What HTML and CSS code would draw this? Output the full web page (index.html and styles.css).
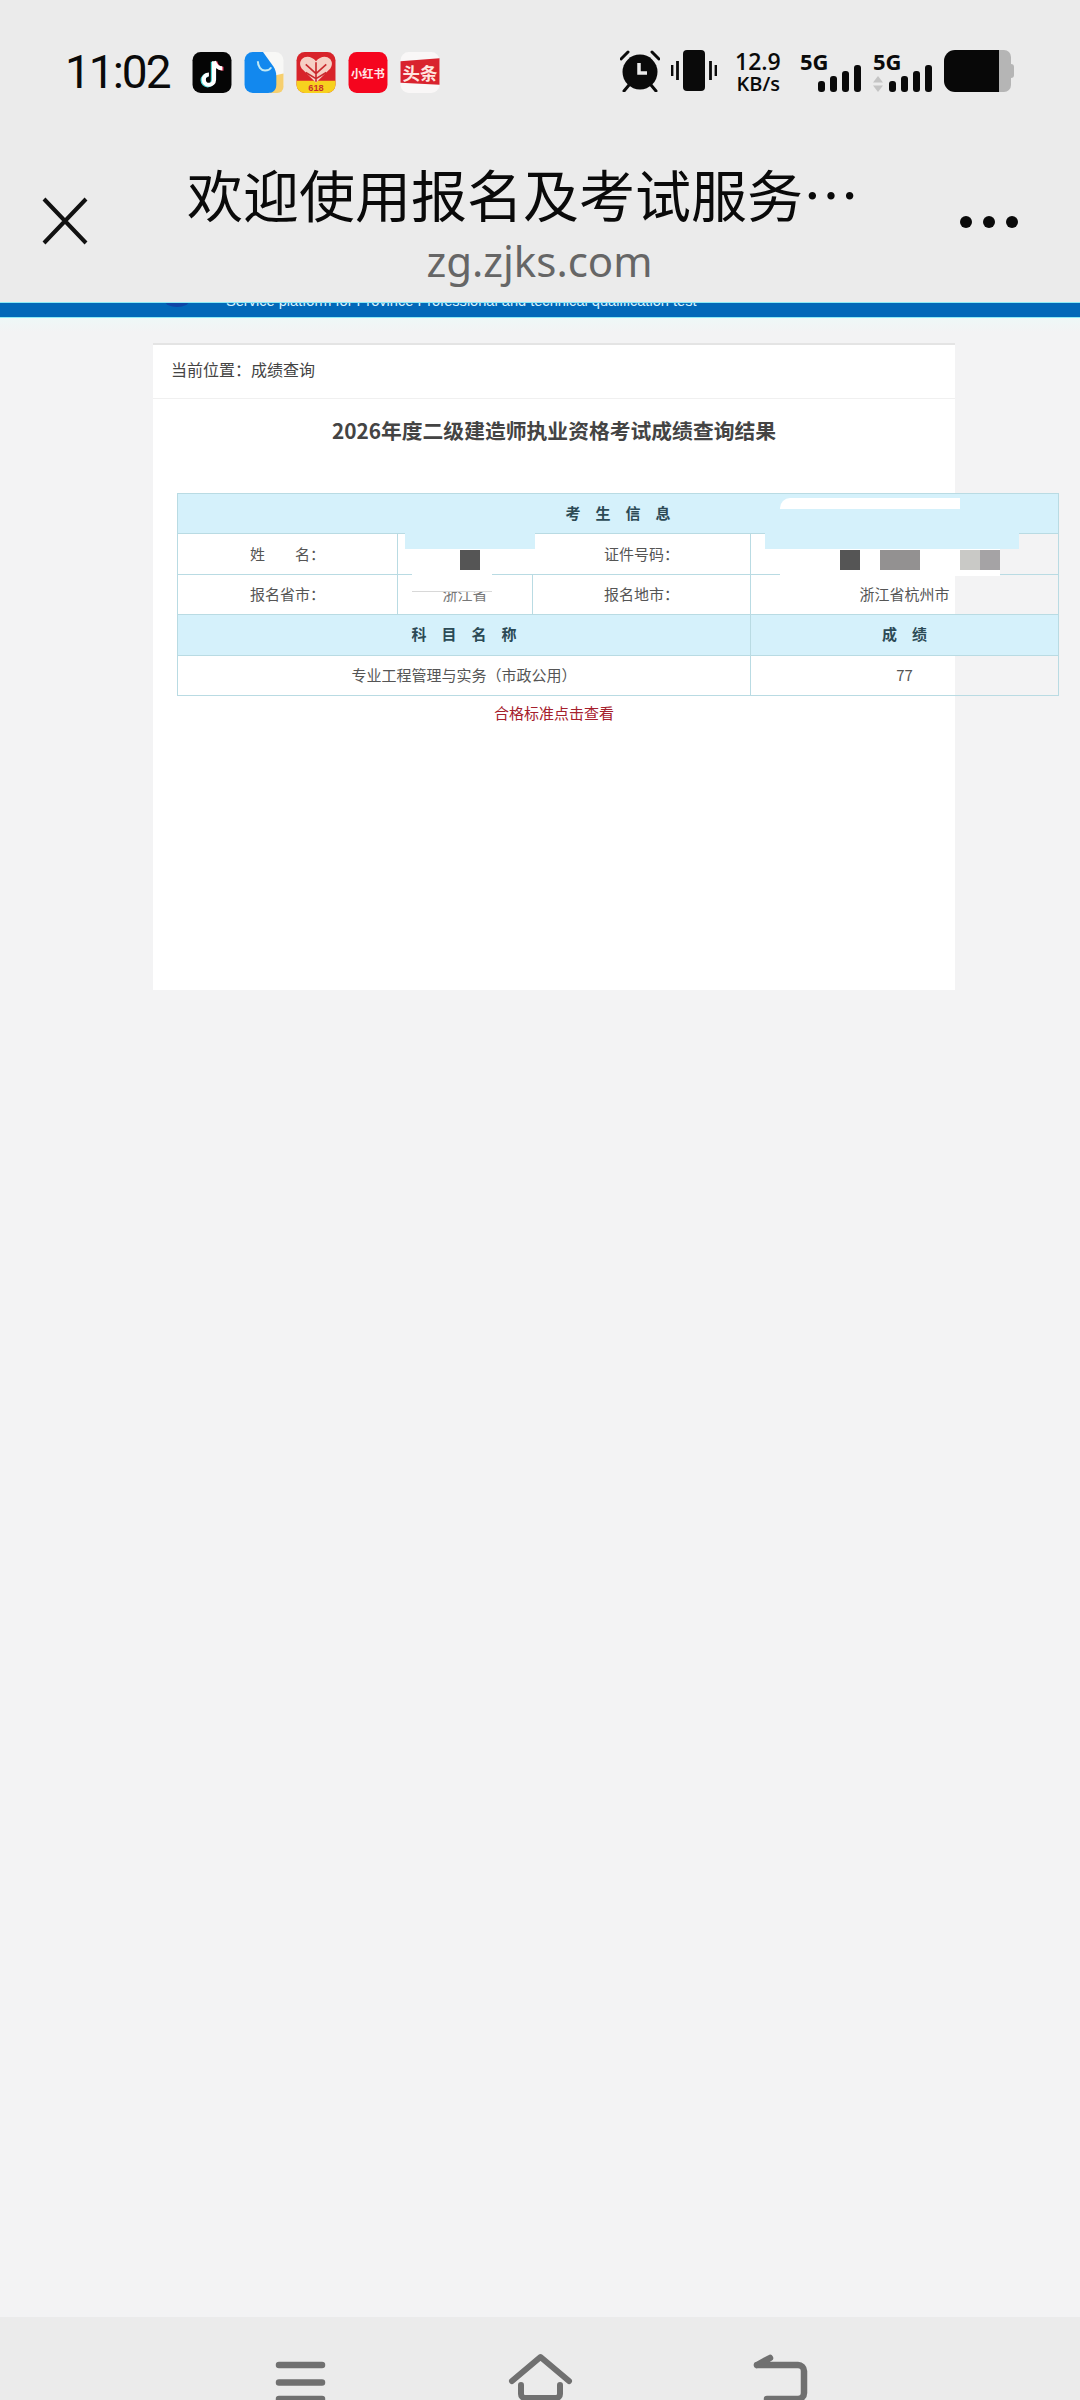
FILE: index.html
```html
<!DOCTYPE html>
<html lang="zh-CN">
<head>
    <meta charset="UTF-8">
    <meta name="viewport" content="width=device-width, initial-scale=1.0">
    <title>成绩查询</title>
    <link rel="stylesheet" href="styles.css">
</head>
<body>
    <!-- 顶部 -->
    <header class="top">
        <div class="status">
            <span class="time">11:02</span>
            <div class="apps">
                <svg class="app" viewBox="0 0 38 40"><rect width="38" height="40" rx="8" fill="#050505"/><path d="M21 9v18a5 5 0 1 1-5-5" fill="none" stroke="#4fd8d8" stroke-width="4" transform="translate(-1.2 .6)"/><path d="M21 9c1 4 4 7 8 7" fill="none" stroke="#ef3f63" stroke-width="4" transform="translate(1.2 .4)"/><path d="M21 9v18a5 5 0 1 1-5-5M21 9c1 4 4 7 8 7" fill="none" stroke="#fff" stroke-width="4"/></svg>
                <svg class="app" viewBox="0 0 38 40"><rect width="38" height="40" rx="8" fill="#f8f8f6"/><path d="M25 40V24l13-3v13a6 6 0 0 1-6 6z" fill="#f6cf6e"/><path d="M8 0h10l10 14c2 3 3 6 3 10v8c0 5-3 8-8 8H8a8 8 0 0 1-8-8V8a8 8 0 0 1 8-8z" fill="#1288ee"/><path d="M13 9c0 5 3 9 7 9 3 0 5-1 6-3" fill="none" stroke="#bfe8f5" stroke-width="2"/></svg>
                <svg class="app" viewBox="0 0 38 40"><rect width="38" height="40" rx="8" fill="#d8232a"/><path d="M0 28h38v4a8 8 0 0 1-8 8H8a8 8 0 0 1-8-8z" fill="#f7d11e"/><path d="M19 30 5 16a8 8 0 0 1 0-9c4-4 10-3 14 2 4-5 10-6 14-2a8 8 0 0 1 0 9z" fill="#f6cfc4"/><path d="M19 29V10M9 12l10 9 10-9M9 20l10 6 10-6" fill="none" stroke="#c92a2e" stroke-width="1.6"/><text class="app-618" x="19" y="38.500">618</text></svg>
                <svg class="app" viewBox="0 0 38 40"><rect width="38" height="40" rx="8" fill="#f5051e"/><text class="app-xhs" x="19" y="25">小红书</text></svg>
                <svg class="app" viewBox="0 0 38 40"><rect width="38" height="40" rx="8" fill="#f9f7f7"/><path d="M0 9l38-3v26l-38-2z" fill="#d9232e"/><text class="app-tt" x="19" y="27">头条</text></svg>
            </div>
            <div class="sys">
                <svg class="alarm" viewBox="0 0 40 42"><circle cx="20" cy="22" r="17.500" fill="#0a0a0a"/><path d="M19 13v10h8" fill="none" stroke="#ebebeb" stroke-width="3.500"/><path d="M1 9l7-7M39 9l-7-7M4 41l5-6M36 41l-5-6" stroke="#0a0a0a" stroke-width="3" stroke-linecap="round"/></svg>
                <svg class="vibrate" viewBox="0 0 46 42"><rect x="12" y="0" width="22" height="41" rx="4" fill="#0a0a0a"/><path d="M1 15v11M6.500 11v19M39.500 11v19M45 15v11" stroke="#0a0a0a" stroke-width="2.800"/></svg>
                <div class="speed"><b>12.9</b><span>KB/s</span></div>
                <div class="sim">
                    <b>5G</b>
                    <div class="bars"><i class="b1"></i><i class="b2"></i><i class="b3"></i><i class="b4"></i></div>
                </div>
                <div class="sim sim2">
                    <b>5G</b>
                    <svg class="arrows" viewBox="0 0 10 16"><path d="M5 0l5 6.500H0zM5 16l5-6.500H0z" fill="#c4c4c4"/></svg>
                    <div class="bars"><i class="b1"></i><i class="b2"></i><i class="b3"></i><i class="b4"></i></div>
                </div>
                <div class="battery"><div class="battery-fill"></div><div class="battery-rest"></div><div class="battery-tip"></div></div>
            </div>
        </div>
        <div class="titlebar">
            <svg class="close" viewBox="0 0 46 48"><path d="M2 2l42 44M44 2 2 46" stroke="#111" stroke-width="4"/></svg>
            <div class="titles">
                <div class="page-title">欢迎使用报名及考试服务…</div>
                <div class="url">zg.zjks.com</div>
            </div>
            <div class="more"><i></i><i></i><i></i></div>
        </div>
    </header>

    <!-- 蓝色横幅 -->
    <div class="band">
        <span class="band-logo"></span>
        <span class="band-text">Service platform for Province Professional and technical qualification test</span>
    </div>

    <!-- 内容 -->
    <main class="main">
        <section class="card">
            <div class="crumb">当前位置：成绩查询</div>
            <h1 class="result-title">2026年度二级建造师执业资格考试成绩查询结果</h1>
            <div class="table-wrap">
                <table class="score">
                    <colgroup>
                        <col class="c1"><col class="c2"><col class="c3"><col class="c4">
                    </colgroup>
                    <tr class="head"><td colspan="4">考&emsp;生&emsp;信&emsp;息</td></tr>
                    <tr><td>姓&emsp;&emsp;名：</td><td></td><td>证件号码：</td><td></td></tr>
                    <tr><td>报名省市：</td><td class="blur">浙江省</td><td>报名地市：</td><td>浙江省杭州市</td></tr>
                    <tr class="head"><td colspan="3">科&emsp;目&emsp;名&emsp;称</td><td>成&emsp;绩</td></tr>
                    <tr><td colspan="3">专业工程管理与实务（市政公用）</td><td>77</td></tr>
                </table>
                <!-- 打码 -->
                <div class="mask mask-a"></div>
                <div class="mask mask-b"></div>
                <div class="mask mask-c"></div>
                <div class="mask mask-d"></div>
                <div class="mask mask-e"></div>
                <div class="mask mask-f"></div>
                <div class="px px1"></div>
                <div class="px px2"></div>
                <div class="px px3"></div>
                <div class="px px4"></div>
                <div class="px px5"></div>
            </div>
            <a class="pass-link">合格标准点击查看</a>
        </section>
    </main>

    <!-- 底部导航 -->
    <nav class="nav">
        <svg class="nav-menu" viewBox="0 0 49 38"><path d="M3 3h43M3 20.500h43M3 37h43" stroke="#707070" stroke-width="6.500" stroke-linecap="round"/></svg>
        <svg class="nav-home" viewBox="0 0 63 46"><path d="M3 27 31.500 3 60 27M12 31v9a4 4 0 0 0 4 4h31a4 4 0 0 0 4-4v-9" fill="none" stroke="#707070" stroke-width="6" stroke-linecap="round" stroke-linejoin="round"/></svg>
        <svg class="nav-back" viewBox="0 0 53 45"><path d="M3 10h41a6 6 0 0 1 6 6v22a6 6 0 0 1-6 6H13M3 10l13-7" fill="none" stroke="#707070" stroke-width="6.500" stroke-linecap="round" stroke-linejoin="round"/></svg>
    </nav>
</body>
</html>
```

FILE: styles.css
```css
/* 页面基本样式 */
html, body {
    margin: 0;
    padding: 0;
}

body {
    width: 1080px;
    height: 2400px;
    overflow: hidden;
    display: flex;
    flex-direction: column;
    background-color: #f3f3f4;
    font-family: "Noto Sans", "Noto Sans CJK SC", sans-serif;
}

/* 顶部 */
.top {
    height: 302px;
    flex: none;
    background-color: #ebebeb;
    position: relative;
    z-index: 2;
}

.status {
    height: 52px;
    padding: 46px 66px 0 65px;
    display: flex;
    align-items: center;
    color: #0a0a0a;
}

.time {
    width: 127px;
    font-family: Roboto, sans-serif;
    font-size: 46px;
    line-height: 42px;
    letter-spacing: -2px;
    margin-top: -1px;
}

.apps {
    display: flex;
    gap: 12px;
}

.app {
    width: 40px;
    height: 41px;
    display: block;
}

.app-618 {
    font-family: "Liberation Sans", sans-serif;
    font-size: 9px;
    font-weight: 700;
    fill: #c9302c;
    text-anchor: middle;
}

.app-xhs {
    font-family: "Noto Sans CJK SC", sans-serif;
    font-size: 11px;
    font-weight: 700;
    fill: #ffe6e6;
    text-anchor: middle;
}

.app-tt {
    font-family: "Noto Sans CJK SC", sans-serif;
    font-size: 17px;
    font-weight: 700;
    fill: #ffe6e0;
    text-anchor: middle;
}

.sys {
    margin-left: auto;
    display: flex;
    align-items: flex-start;
}

.alarm {
    width: 40px;
    height: 42px;
    margin-right: 11px;
}

.vibrate {
    width: 46px;
    height: 42px;
    margin-right: 18px;
}

.speed {
    width: 45px;
    margin-right: 20px;
    margin-top: -1px;
    text-align: right;
    display: flex;
    flex-direction: column;
    font-family: "Open Sans", sans-serif;
}

.speed b {
    font-size: 23px;
    line-height: 24px;
    font-weight: 600;
}

.speed span {
    font-size: 20px;
    line-height: 22px;
    font-weight: 600;
}

.sim {
    width: 61px;
    height: 42px;
    margin-right: 12px;
    position: relative;
}

.sim2 {
    width: 59px;
}

.sim b {
    display: block;
    font-family: "Open Sans", sans-serif;
    font-size: 22px;
    line-height: 22px;
    font-weight: 700;
}

.bars {
    position: absolute;
    right: 0;
    bottom: 0;
    display: flex;
    align-items: flex-end;
    gap: 4.500px;
}

.bars i {
    width: 7.500px;
    border-radius: 3px;
    background-color: #0a0a0a;
}

.bars .b1 { height: 11px; }
.bars .b2 { height: 16px; }
.bars .b3 { height: 21px; }
.bars .b4 { height: 27px; }

.arrows {
    position: absolute;
    left: 0;
    bottom: 0;
    width: 10px;
    height: 16px;
}

.battery {
    width: 70px;
    height: 42px;
    display: flex;
    align-items: center;
}

.battery-fill {
    width: 55px;
    height: 42px;
    border-radius: 11px 0 0 11px;
    background-color: #080808;
}

.battery-rest {
    width: 12px;
    height: 42px;
    border-radius: 0 7px 7px 0;
    background-color: #b5b5b5;
}

.battery-tip {
    width: 3px;
    height: 14px;
    border-radius: 0 3px 3px 0;
    background-color: #b5b5b5;
}

.titlebar {
    height: 112px;
    margin-top: 66px;
    padding: 0 62px 0 42px;
    display: flex;
    position: relative;
}

.close {
    width: 46px;
    height: 48px;
    margin-top: 33px;
    flex: none;
}

.titles {
    margin-left: 99px;
    width: 740px;
}

.page-title {
    font-family: "Noto Sans CJK SC", sans-serif;
    font-size: 56px;
    line-height: 76px;
    color: #0a0a0a;
    white-space: nowrap;
    margin-top: -9px;
}

.url {
    width: 705px;
    text-align: center;
    font-size: 42px;
    line-height: 48px;
    color: #666;
    margin-top: 6px;
}

.more {
    margin-left: auto;
    margin-top: 52px;
    display: flex;
    gap: 11px;
}

.more i {
    width: 12px;
    height: 12px;
    border-radius: 50%;
    background-color: #0a0a0a;
}

/* 蓝色横幅 */
.band {
    height: 14px;
    flex: none;
    background-color: #0268b8;
    border-top: 1px solid #8deaf5;
    border-bottom: 1px solid #8deaf5;
    overflow: hidden;
    position: relative;
}

.band-logo {
    position: absolute;
    left: 165px;
    top: -8px;
    width: 24px;
    height: 12px;
    border-radius: 50%;
    background-color: #0f45a6;
}

.band-text {
    display: block;
    margin: -12px 0 0 226px;
    font-family: "Liberation Sans", sans-serif;
    font-size: 14.600px;
    line-height: 20px;
    color: #d9f3ff;
    white-space: nowrap;
}

/* 内容 */
.main {
    flex: 1;
    padding: 25px 0 0 153px;
    background: linear-gradient(#eef8f7, #f3f3f4 14px);
}

.card {
    width: 802px;
    height: 647px;
    background-color: #fff;
    border-top: 2px solid #e4e4e4;
    box-sizing: border-box;
}

.crumb {
    height: 53px;
    padding-left: 18px;
    border-bottom: 1px solid #f0f0f0;
    font-family: "Noto Sans CJK SC", sans-serif;
    font-size: 16px;
    line-height: 49px;
    color: #444;
}

.result-title {
    margin: 0;
    padding-top: 16px;
    height: 78px;
    box-sizing: content-box;
    text-align: center;
    font-family: "Noto Sans CJK SC", sans-serif;
    font-size: 20.800px;
    line-height: 30px;
    font-weight: 700;
    color: #444;
}

.table-wrap {
    width: 881px;
    margin-left: 24px;
    position: relative;
}

.score {
    width: 881px;
    table-layout: fixed;
    border-collapse: collapse;
    font-family: "Noto Sans CJK SC", sans-serif;
    font-size: 15px;
    color: #555;
}

.score .c1 { width: 220px; }
.score .c2 { width: 135px; }
.score .c3 { width: 218px; }
.score .c4 { width: 308px; }

.score td {
    height: 37.400px;
    padding: 0 0 2px;
    text-align: center;
    border: 1px solid #b9dbe3;
}

.head td {
    background-color: #d5f1fb;
    color: #2c4a55;
    font-weight: 700;
}

.blur {
    color: #777;
}

/* 打码部分 */
.mask,
.px {
    position: absolute;
}

.mask-a {
    left: 228px;
    top: 12px;
    width: 130px;
    height: 44px;
    background-color: #d5f1fb;
}

.mask-b {
    left: 588px;
    top: 12px;
    width: 254px;
    height: 44px;
    background-color: #d5f1fb;
}

.mask-c {
    left: 603px;
    top: 5px;
    width: 180px;
    height: 11px;
    background-color: #fff;
    border-radius: 10px 0 0 0;
}

.mask-d {
    left: 222px;
    top: 56px;
    width: 135px;
    height: 25px;
    background-color: #fff;
}

.mask-e {
    left: 603px;
    top: 56px;
    width: 220px;
    height: 27px;
    background-color: #fff;
}

.mask-f {
    left: 235px;
    top: 81px;
    width: 80px;
    height: 17px;
    background-color: #fff;
    border-bottom: 1px solid #d8d8d8;
}

.px {
    top: 57px;
    height: 20px;
}

.px1 { left: 283px; width: 20px; background-color: #555; }
.px2 { left: 663px; width: 20px; background-color: #555; }
.px3 { left: 703px; width: 40px; background-color: #939191; }
.px4 { left: 783px; width: 20px; background-color: #c9c9c6; }
.px5 { left: 803px; width: 20px; background-color: #a5a3a5; }

.pass-link {
    display: block;
    width: 802px;
    margin-top: 6px;
    text-align: center;
    font-family: "Noto Sans CJK SC", sans-serif;
    font-size: 15px;
    line-height: 22px;
    color: #a5202c;
}

/* 底部导航 */
.nav {
    height: 83px;
    flex: none;
    background-color: #ebebeb;
    position: relative;
    overflow: hidden;
}

.nav svg {
    position: absolute;
    overflow: visible;
}

.nav-menu { left: 276px; top: 45px; width: 49px; height: 38px; }
.nav-home { left: 509px; top: 37px; width: 63px; height: 46px; }
.nav-back { left: 754px; top: 38px; width: 53px; height: 45px; }
```
